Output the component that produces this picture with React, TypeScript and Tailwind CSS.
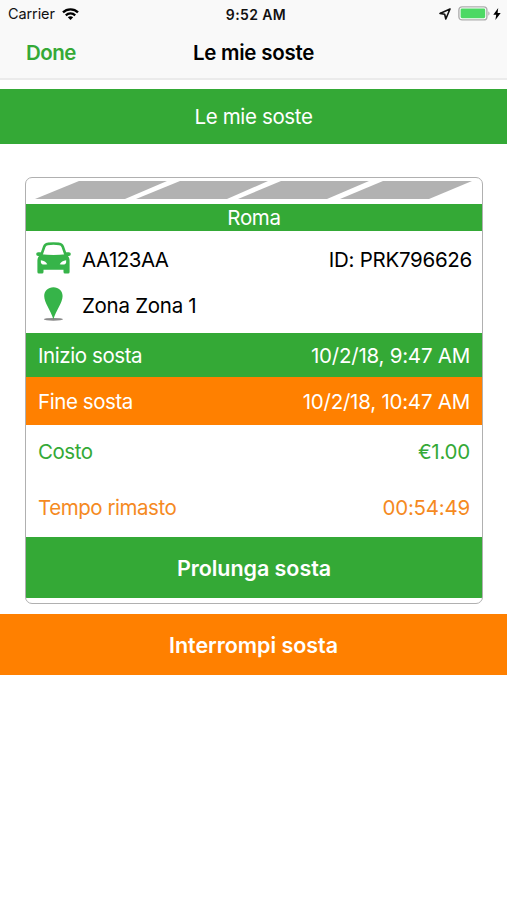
import type { ReactNode } from 'react'

interface RowProps {
  label: string
  value: string
  labelClass?: string
  className: string
}

function Row({ label, value, labelClass = '', className }: RowProps) {
  return (
    <div className={`flex items-center justify-between px-3 ${className}`}>
      <span className={labelClass}>{label}</span>
      <span className="tracking-[-0.23px]">{value}</span>
    </div>
  )
}

function StatusBar() {
  return (
    <div className="grid h-7 grid-cols-3 items-center pl-2 pr-1.5 text-[14.5px] text-[#111]">
      <div className="flex items-center gap-[7px]">
        <span className="tracking-[-0.1px]">Carrier</span>
        <svg width="17" height="12" viewBox="0 0 17 12" fill="none" stroke="#000" strokeWidth="2.3">
          <path d="M1 4.4C5 .4 12 .4 16 4.4" />
          <path d="M3.8 7.3c2.6-2.5 6.8-2.5 9.4 0" />
          <path d="M8.5 12 5.8 9.3c1.5-1.4 3.9-1.4 5.4 0z" fill="#000" stroke="none" />
        </svg>
      </div>
      <span className="pl-[3px] text-center text-[14px] font-semibold tracking-[0.4px]">9:52 AM</span>
      <div className="flex items-center justify-end">
        <svg className="mr-[7px]" width="12" height="12" viewBox="0 0 12 12" fill="none" stroke="#111" strokeWidth="1.6" strokeLinejoin="round">
          <path d="M11 1 1 5.4l4.700.9L6.800 11z" />
        </svg>
        <svg className="-mt-0.5" width="32" height="15" viewBox="0 0 32 15">
          <rect x=".9" y=".9" width="28" height="13" rx="3.2" fill="#fff" stroke="#adadad" strokeWidth="1.4" />
          <rect x="2.6" y="2.6" width="24.6" height="9.6" rx="1.4" fill="#4cd964" />
          <path d="M30.3 5.3c1.7.8 1.7 3.6 0 4.4z" fill="#adadad" />
        </svg>
        <svg className="ml-[3px] -mt-px" width="8" height="12" viewBox="0 0 8 12" fill="#000">
          <path d="M5.2 0 .3 6.7h2.9L2.4 12l5.300-7H4.600z" />
        </svg>
      </div>
    </div>
  )
}

function RoadStripes() {
  return (
    <svg className="block" width="455" height="26" viewBox="0 0 455 26" fill="#b2b2b2">
      <path d="M9 21 53 3h88L99 21z" />
      <path d="M110 21 154 3h88l-41 18z" />
      <path d="M212 21 255 3h88l-42 18z" />
      <path d="M314 21 357 3h89l-43 18z" />
    </svg>
  )
}

function CarIcon() {
  return (
    <svg className="-mt-0.5" width="35" height="32" viewBox="0 0 35 32" fill="#36b449">
      {/* roof and mirrors */}
      <path d="M5 14 8.200 4.800Q9.200 2.200 11.800 1.900Q17.500 1.100 23.200 1.900Q25.800 2.200 26.800 4.800L30 14" fill="none" stroke="#36b449" strokeWidth="2.600" />
      <rect x=".2" y="10.200" width="6" height="3.800" rx="1.900" />
      <rect x="28.800" y="10.200" width="6" height="3.800" rx="1.900" />
      {/* body and wheels */}
      <path d="M5 12.200Q17.500 13.800 30 12.200Q33.600 14.500 33.600 18.500V30Q33.600 31.500 32.100 31.500H29Q27.500 31.500 27.500 30V27.800H7.500V30Q7.500 31.500 6 31.500H2.900Q1.400 31.500 1.400 30V18.500Q1.400 14.500 5 12.200Z" />
      {/* headlights */}
      <path d="M4.800 18.200Q9.500 18.600 11.300 22.200Q8 22.900 6 22.200Q4.500 21.600 4.800 18.200Z" fill="#fff" />
      <path d="M30.200 18.200Q25.500 18.600 23.700 22.200Q27 22.900 29 22.200Q30.500 21.600 30.200 18.200Z" fill="#fff" />
    </svg>
  )
}

function PinIcon() {
  return (
    <svg className="-mt-px" width="35" height="34" viewBox="0 0 35 34">
      <ellipse cx="17.4" cy="32.3" rx="9.6" ry="1.4" fill="#8a8a8a" />
      <path d="M17.4.3c5.3 0 9.2 3.7 9.2 8.7 0 6.5-6.500 14.500-9.200 23.200C14.700 23.500 8.200 15.500 8.200 9c0-5 3.900-8.700 9.200-8.700z" fill="#36b449" />
    </svg>
  )
}

function ActionButton({ children, className }: { children: ReactNode; className: string }) {
  return (
    <button className={`block h-[61px] w-full pt-px text-[21.5px] font-semibold tracking-[-0.05px] text-white ${className}`}>
      {children}
    </button>
  )
}

export default function App() {
  return (
    <div className="h-[900px] w-[507px] overflow-hidden bg-white font-['Inter','Liberation_Sans',sans-serif] text-[20.5px] tracking-[-0.35px] text-black">
      <header className="h-20 border-b-2 border-[#ebebeb] bg-[#f9f9f9]">
        <StatusBar />
        <div className="grid h-[50px] grid-cols-[1fr_auto_1fr] items-center pt-px font-semibold">
          <button className="pl-[26px] text-left tracking-[-0.5px] text-[#34a936]">Done</button>
          <h1 className="tracking-[-0.25px]">Le mie soste</h1>
        </div>
      </header>

      <div className="mt-[9px] flex h-[55px] items-center justify-center bg-[#34a936] pt-0.5 text-white">
        Le mie soste
      </div>

      <main className="ml-[25px] mt-[33px] h-[427px] w-[458px] overflow-hidden rounded-[7px] border border-[#b0b0b0]">
        <RoadStripes />
        <div className="flex h-[27px] items-center justify-center bg-[#34a936] pt-px text-white">Roma</div>

        <div className="flex h-[102px] flex-col px-2.5 pt-[10px]">
          <div className="flex h-[35px] items-center">
            <CarIcon />
            <span className="ml-[11px] pt-[3px] tracking-[-0.5px]">AA123AA</span>
            <span className="ml-auto pt-[3px] tracking-[-0.28px]">ID: PRK796626</span>
          </div>
          <div className="mt-[11px] flex h-[35px] items-center">
            <PinIcon />
            <span className="ml-[11px] pt-[3px] tracking-[-0.28px]">Zona Zona 1</span>
          </div>
        </div>

        <Row label="Inizio sosta" value="10/2/18, 9:47 AM" labelClass="tracking-[-0.42px]" className="h-[44px] bg-[#34a936] pt-0.5 text-white" />
        <Row label="Fine sosta" value="10/2/18, 10:47 AM" labelClass="tracking-[-0.42px]" className="h-[48px] bg-[#ff8000] pt-0.5 text-white" />
        <Row label="Costo" value="€1.00" labelClass="tracking-[-0.45px]" className="h-[54px] text-[#34a936]" />
        <Row label="Tempo rimasto" value="00:54:49" labelClass="tracking-[-0.45px]" className="h-[58px] text-[#f58a1f]" />
        <ActionButton className="bg-[#34a936]">Prolunga sosta</ActionButton>
      </main>

      <ActionButton className="mt-2.5 bg-[#ff8000]">Interrompi sosta</ActionButton>
    </div>
  )
}
